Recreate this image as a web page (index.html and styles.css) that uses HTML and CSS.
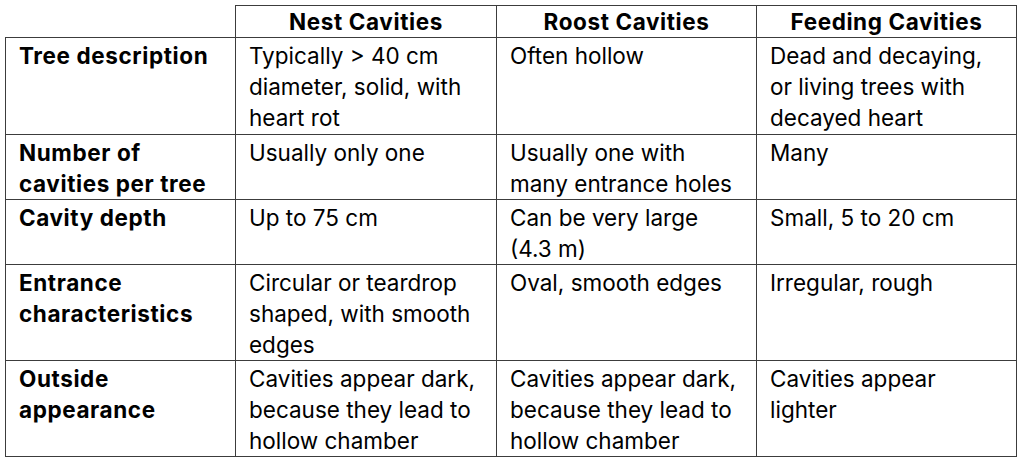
FILE: index.html
```html
<!DOCTYPE html>
<html>
<head>
<meta charset="utf-8">
<link rel="stylesheet" href="styles.css">
</head>
<body>
<table class="cav">
  <colgroup>
    <col class="c0"><col class="c1"><col class="c2"><col class="c3">
  </colgroup>
  <tr class="r-head">
    <th class="blank"></th>
    <th>Nest Cavities</th>
    <th>Roost Cavities</th>
    <th>Feeding Cavities</th>
  </tr>
  <tr class="r1">
    <td class="lab">Tree description</td>
    <td>Typically &gt; 40 cm<br>diameter, solid, with<br>heart rot</td>
    <td>Often hollow</td>
    <td>Dead and decaying,<br>or living trees with<br>decayed heart</td>
  </tr>
  <tr class="r2">
    <td class="lab">Number of<br>cavities per tree</td>
    <td>Usually only one</td>
    <td>Usually one with<br>many entrance holes</td>
    <td>Many</td>
  </tr>
  <tr class="r3">
    <td class="lab">Cavity depth</td>
    <td>Up to 75 cm</td>
    <td>Can be very large<br>(4.3 m)</td>
    <td>Small, 5 to 20 cm</td>
  </tr>
  <tr class="r4">
    <td class="lab">Entrance<br>characteristics</td>
    <td>Circular or teardrop<br>shaped, with smooth<br>edges</td>
    <td>Oval, smooth edges</td>
    <td>Irregular, rough</td>
  </tr>
  <tr class="r5">
    <td class="lab">Outside<br>appearance</td>
    <td>Cavities appear dark,<br>because they lead to<br>hollow chamber</td>
    <td>Cavities appear dark,<br>because they lead to<br>hollow chamber</td>
    <td>Cavities appear<br>lighter</td>
  </tr>
</table>
</body>
</html>
```

FILE: styles.css
```css
html, body {
  margin: 0;
  padding: 0;
  background: #ffffff;
}

body {
  font-family: Inter, "Noto Sans", "Liberation Sans", sans-serif;
  font-size: 22.5px;
  line-height: 31px;
  color: #000000;
}

.cav {
  border-collapse: collapse;
  table-layout: fixed;
  margin: 5px 0 0 5px;
  width: 1012px;
}

.c0 { width: 230px; }
.c1 { width: 261px; }
.c2 { width: 260px; }
.c3 { width: 260px; }

.cav th,
.cav td {
  border: 1px solid #3c3c3c;
  vertical-align: top;
  text-align: left;
  white-space: nowrap;
  padding: 2px 2px 0 13px;
  overflow: hidden;
}

.cav th {
  font-weight: 700;
  letter-spacing: 0.6px;
  text-align: center;
  padding: 0 2px;
}

.cav th.blank {
  border-top: none;
  border-left: none;
}

.cav td.lab {
  font-weight: 700;
  letter-spacing: 0.6px;
}

.r-head { height: 31px; }
.r1 { height: 97px; }
.r2 { height: 62px; }
.r3 { height: 63px; }
.r4 { height: 95px; }
.r5 { height: 95px; }
```
